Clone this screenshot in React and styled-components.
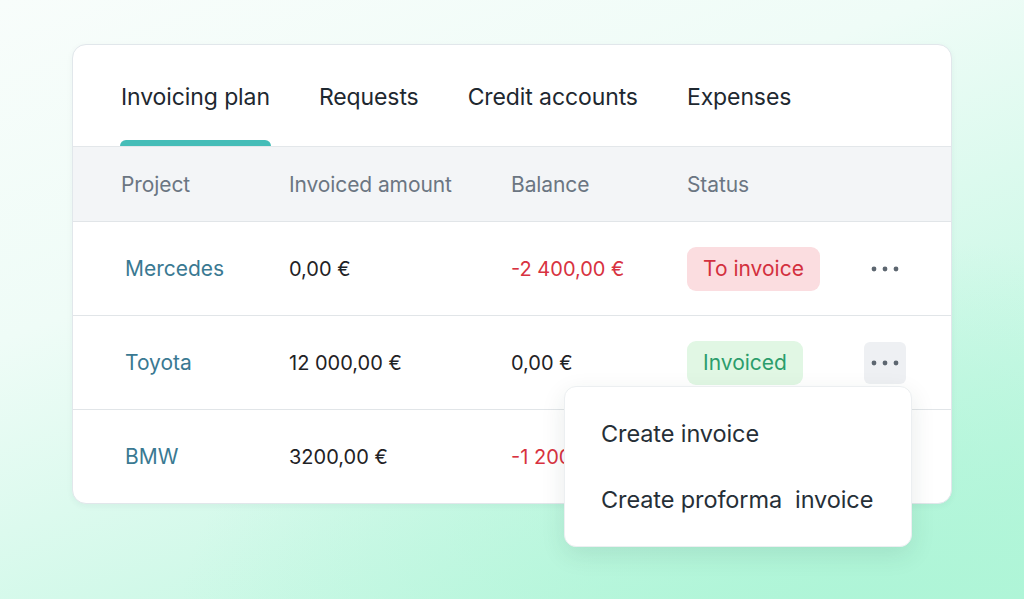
import styled, { createGlobalStyle } from 'styled-components';

const GlobalStyle = createGlobalStyle`
  html, body {
    margin: 0;
    padding: 0;
  }
  body {
    font-family: Inter, "Liberation Sans", sans-serif;
    -webkit-font-smoothing: antialiased;
  }
`;

const tabs = ['Invoicing plan', 'Requests', 'Credit accounts', 'Expenses'];

const rows = [
  { project: 'Mercedes', invoiced: '0,00 €', balance: '-2 400,00 €', negative: true, status: 'To invoice', kind: 'todo' },
  { project: 'Toyota', invoiced: '12 000,00 €', balance: '0,00 €', status: 'Invoiced', kind: 'done', open: true },
  { project: 'BMW', invoiced: '3200,00 €', balance: '-1 200,00 €', negative: true },
];

export default function App() {
  return (
    <>
      <GlobalStyle />
      <Page>
        <Card>
          <TabBar>
            {tabs.map((t, i) => (
              <Tab key={t} $active={i === 0}>
                <TabLabel>{t}</TabLabel>
              </Tab>
            ))}
          </TabBar>
          <HeaderRow>
            <HeadCell>Project</HeadCell>
            <HeadCell>Invoiced amount</HeadCell>
            <HeadCell>Balance</HeadCell>
            <HeadCell>Status</HeadCell>
            <HeadCell />
          </HeaderRow>
          {rows.map(r => (
            <Row key={r.project}>
              <ProjectName>{r.project}</ProjectName>
              <Amount>{r.invoiced}</Amount>
              <Amount $negative={r.negative}>{r.balance}</Amount>
              <div>{r.status && <Badge $kind={r.kind}>{r.status}</Badge>}</div>
              <ActionCell>
                {r.status && (
                  <DotsButton $open={r.open}>
                    <svg width="28" height="6" viewBox="0 0 28 6">
                      <circle cx="3" cy="3" r="2.4" fill="#5d6670" />
                      <circle cx="14" cy="3" r="2.4" fill="#5d6670" />
                      <circle cx="25" cy="3" r="2.4" fill="#5d6670" />
                    </svg>
                  </DotsButton>
                )}
                {r.open && (
                  <Menu>
                    <MenuItem>Create invoice</MenuItem>
                    <MenuItem>Create proforma&nbsp; invoice</MenuItem>
                  </Menu>
                )}
              </ActionCell>
            </Row>
          ))}
        </Card>
      </Page>
    </>
  );
}

const Page = styled.div`
  width: 1024px;
  height: 599px;
  box-sizing: border-box;
  padding: 44px 0 0 72px;
  overflow: hidden;
  background:
    radial-gradient(ellipse 700px 380px at 880px 620px, #aef5d7 0%, rgba(174, 245, 215, 0) 100%),
    linear-gradient(160deg, #f8fdfb 0%, #effcf7 35%, #c9f8e5 75%, #b2f5d9 100%);
`;

const Card = styled.div`
  width: 880px;
  box-sizing: border-box;
  background: #fff;
  border: 1px solid #e1e7eb;
  border-radius: 14px;
  box-shadow: 0 2px 6px rgba(40, 60, 70, 0.05);
`;

const TabBar = styled.div`
  display: flex;
  gap: 47px;
  padding: 0 47px;
  border-bottom: 1px solid #e3e7ea;
`;

const Tab = styled.div`
  display: flex;
  flex-direction: column;
  padding-top: 39px;
  &::after {
    content: '';
    display: block;
    height: 6px;
    margin-top: 30px;
    border-radius: 6px 6px 0 0;
    background: ${p => (p.$active ? '#45bdb8' : 'transparent')};
  }
`;

const TabLabel = styled.span`
  font-size: 23px;
  line-height: 26px;
  color: #1e2830;
  padding: 0 1px;
  letter-spacing: -0.1px;
`;

const columns = '168px 222px 176px 177px 1fr';

const HeaderRow = styled.div`
  display: grid;
  grid-template-columns: ${columns};
  align-items: center;
  height: 74px;
  padding: 0 48px;
  background: #f3f5f7;
`;

const HeadCell = styled.div`
  font-size: 21px;
  letter-spacing: -0.1px;
  color: #6b7682;
`;

const Row = styled.div`
  display: grid;
  grid-template-columns: ${columns};
  align-items: center;
  height: 93px;
  padding: 0 48px;
  border-top: 1px solid #e1e5e8;
`;

const ProjectName = styled.div`
  padding-left: 4px;
  font-size: 21px;
  color: #3a7992;
`;

const Amount = styled.div`
  font-size: 20px;
  color: ${p => (p.$negative ? '#d8323f' : '#1f2225')};
`;

const Badge = styled.span`
  display: inline-flex;
  align-items: center;
  height: 44px;
  padding: 0 16px;
  border-radius: 9px;
  font-size: 21px;
  background: ${p => (p.$kind === 'todo' ? '#fbdde0' : '#e1f7e4')};
  color: ${p => (p.$kind === 'todo' ? '#d3303e' : '#2c9d6c')};
`;

const ActionCell = styled.div`
  position: relative;
  height: 42px;
`;

const DotsButton = styled.div`
  display: flex;
  align-items: center;
  justify-content: center;
  width: 42px;
  height: 42px;
  border-radius: 6px;
  background: ${p => (p.$open ? '#eef0f3' : 'transparent')};
`;

const Menu = styled.div`
  position: absolute;
  top: 44px;
  left: -300px;
  width: 348px;
  box-sizing: border-box;
  padding: 14px 0 13px;
  background: #fff;
  border: 1px solid #eceff1;
  border-radius: 12px;
  box-shadow: 0 8px 24px rgba(30, 60, 50, 0.1);
  z-index: 2;
`;

const MenuItem = styled.div`
  display: flex;
  align-items: center;
  height: 66px;
  padding-left: 36px;
  font-size: 23.5px;
  letter-spacing: -0.1px;
  color: #262f37;
  white-space: nowrap;
`;
